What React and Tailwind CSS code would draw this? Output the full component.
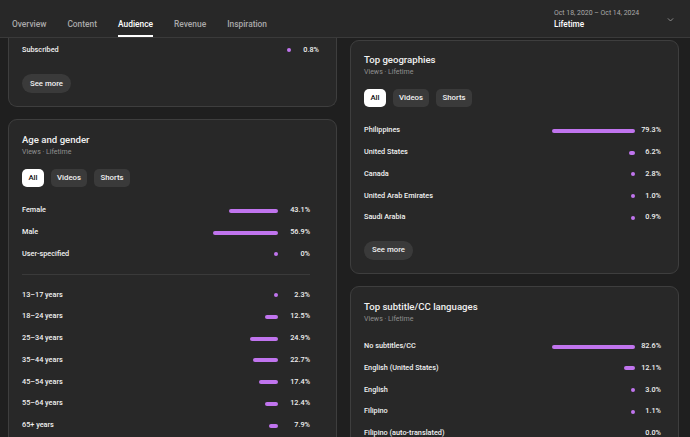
import React from 'react';

const font = { fontFamily: 'Roboto, "Noto Sans", sans-serif' };

const tabs = ['Overview', 'Content', 'Audience', 'Revenue', 'Inspiration'];

const gender = [
  { label: 'Female', pct: '43.1%', w: 49 },
  { label: 'Male', pct: '56.9%', w: 65 },
  { label: 'User-specified', pct: '0%', w: 4 },
];

const ages = [
  { label: '13–17 years', pct: '2.3%', w: 4 },
  { label: '18–24 years', pct: '12.5%', w: 13 },
  { label: '25–34 years', pct: '24.9%', w: 28 },
  { label: '35–44 years', pct: '22.7%', w: 25 },
  { label: '45–54 years', pct: '17.4%', w: 19 },
  { label: '55–64 years', pct: '12.4%', w: 13 },
  { label: '65+ years', pct: '7.9%', w: 9 },
];

const geos = [
  { label: 'Philippines', pct: '79.3%', w: 83 },
  { label: 'United States', pct: '6.2%', w: 6 },
  { label: 'Canada', pct: '2.8%', w: 4 },
  { label: 'United Arab Emirates', pct: '1.0%', w: 4 },
  { label: 'Saudi Arabia', pct: '0.9%', w: 4 },
];

const subs = [
  { label: 'No subtitles/CC', pct: '82.6%', w: 83 },
  { label: 'English (United States)', pct: '12.1%', w: 11 },
  { label: 'English', pct: '3.0%', w: 4 },
  { label: 'Filipino', pct: '1.1%', w: 4 },
  { label: 'Filipino (auto-translated)', pct: '0.0%', w: 0 },
];

// 한 줄: 이름, 막대, 비율
function Row({ label, pct, w, narrow }) {
  return (
    <div className="flex items-center h-[21.75px]">
      <span className="flex-1 text-[7.3px] font-medium text-[#f1f1f1]">{label}</span>
      {w > 0 && (
        <div className="h-[4px] rounded-full bg-[#c074ee]" style={{ width: w }} />
      )}
      <span className={narrow ? 'w-[26px] text-right text-[7.3px] font-medium text-[#f1f1f1]' : 'w-[32px] text-right text-[7.3px] font-medium text-[#f1f1f1]'}>{pct}</span>
    </div>
  );
}

function Chips() {
  return (
    <div className="flex gap-[7px] mt-[10px]">
      <div className="h-[18px] w-[22px] flex items-center justify-center rounded-[5px] bg-white text-[7.8px] font-medium text-[#0f0f0f]">All</div>
      <div className="h-[18px] w-[36px] flex items-center justify-center rounded-[5px] bg-[#3a3a3a] text-[7.8px] font-medium text-[#f1f1f1]">Videos</div>
      <div className="h-[18px] w-[36px] flex items-center justify-center rounded-[5px] bg-[#3a3a3a] text-[7.8px] font-medium text-[#f1f1f1]">Shorts</div>
    </div>
  );
}

function Heading({ title }) {
  return (
    <div>
      <div className="text-[9.6px] leading-[13px] font-medium text-[#f1f1f1]">{title}</div>
      <div className="text-[7px] leading-[13px] text-[#909090]">Views · Lifetime</div>
    </div>
  );
}

function SeeMore() {
  return (
    <div className="h-[19px] w-[49px] flex items-center justify-center rounded-full bg-[#3a3a3a] text-[7.8px] font-medium text-[#f1f1f1]">
      See more
    </div>
  );
}

export default function App() {
  return (
    <div style={font} className="w-[690px] h-[437px] overflow-hidden bg-[#1f1f1f] flex flex-col">
      {/* 상단 탭 */}
      <div className="h-[38px] shrink-0 bg-[#282828] border-b border-[#3a3a3a] flex items-stretch pl-[12px] pr-[15px]">
        <div className="flex gap-[21px]">
          {tabs.map((t) => (
            <div key={t} className="relative flex items-center pt-[11px]">
              <span className={t === 'Audience' ? 'text-[8.4px] font-medium text-white' : 'text-[8.4px] font-medium text-[#aaaaaa]'}>{t}</span>
              {t === 'Audience' && <div className="absolute left-0 right-0 bottom-0 h-[2px] bg-white" />}
            </div>
          ))}
        </div>
        <div className="ml-auto flex items-center">
          <div className="flex flex-col w-[112px]">
            <span className="text-[6.9px] leading-[10px] text-[#aaaaaa]">Oct 18, 2020 – Oct 14, 2024</span>
            <span className="text-[8.2px] leading-[12px] font-medium text-white">Lifetime</span>
          </div>
          <svg width="9" height="9" viewBox="0 0 24 24" fill="none" stroke="#aaaaaa" strokeWidth="2" className="mt-[1px]">
            <path d="M5 9l7 7 7-7" />
          </svg>
        </div>
      </div>

      <div className="flex gap-[13px] pl-[8px]">
        {/* 왼쪽 열 */}
        <div className="w-[329px] flex flex-col gap-[12px]">
          <div className="rounded-b-[9px] border border-t-0 border-[#3e3e3e] bg-[#282828] pl-[13px] pr-[17px] pt-[1px] pb-[13px]">
            <div className="flex items-center h-[22px]">
              <span className="flex-1 text-[7.3px] font-medium text-[#f1f1f1]">Subscribed</span>
              <div className="h-[4px] w-[4px] rounded-full bg-[#c074ee]" />
              <span className="w-[28px] text-right text-[7.3px] font-medium text-[#f1f1f1]">0.8%</span>
            </div>
            <div className="mt-[13px]">
              <SeeMore />
            </div>
          </div>

          <div className="rounded-[9px] border border-[#3e3e3e] bg-[#282828] pl-[13px] pr-[26px] pt-[13px] pb-[10px]">
            <Heading title="Age and gender" />
            <Chips />
            <div className="mt-[13px]">
              {gender.map((r) => <Row key={r.label} {...r} />)}
            </div>
            <div className="h-px bg-[#3a3a3a] my-[9px]" />
            <div>
              {ages.map((r) => <Row key={r.label} {...r} />)}
            </div>
          </div>
        </div>

        {/* 오른쪽 열 */}
        <div className="w-[329px] flex flex-col gap-[12px] pt-[2px]">
          <div className="rounded-[9px] border border-[#3e3e3e] bg-[#282828] pl-[13px] pr-[17px] pt-[12px] pb-[13px]">
            <Heading title="Top geographies" />
            <Chips />
            <div className="mt-[13px]">
              {geos.map((r) => <Row key={r.label} {...r} narrow />)}
            </div>
            <div className="mt-[12px]">
              <SeeMore />
            </div>
          </div>

          <div className="rounded-[9px] border border-[#3e3e3e] bg-[#282828] pl-[13px] pr-[17px] pt-[13px] pb-[10px]">
            <Heading title="Top subtitle/CC languages" />
            <div className="mt-[10px]">
              {subs.map((r) => <Row key={r.label} {...r} narrow />)}
            </div>
          </div>
        </div>
      </div>
    </div>
  );
}
